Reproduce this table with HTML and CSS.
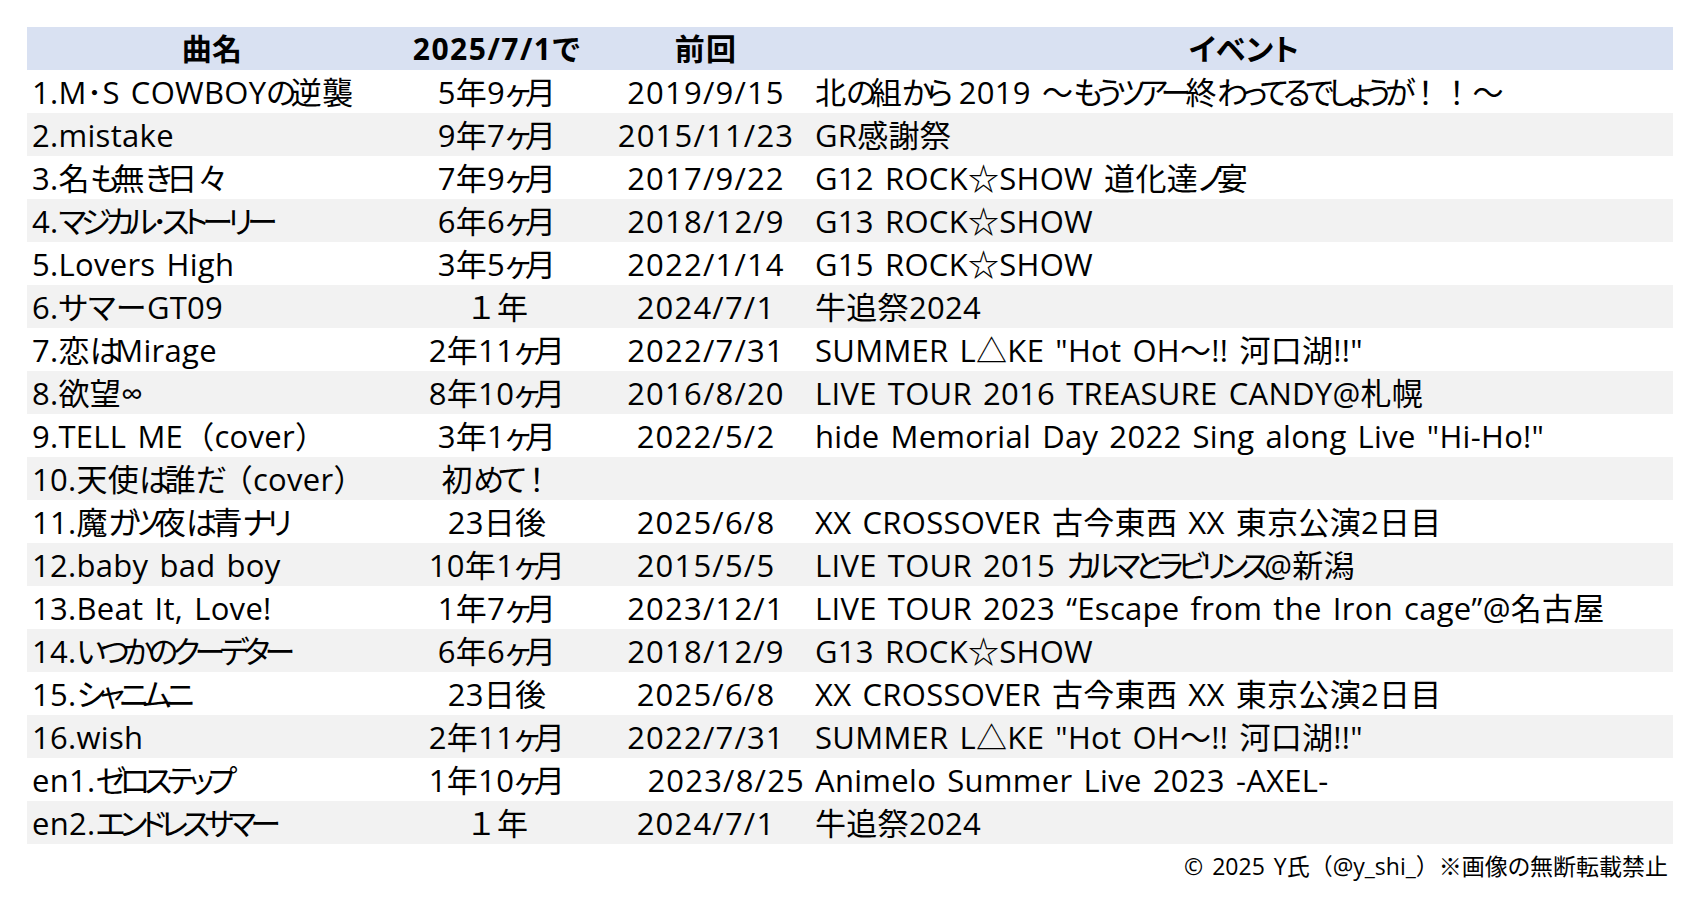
FILE: index.html
```html
<!DOCTYPE html>
<html lang="ja">
<head>
<meta charset="utf-8">
<title>セットリスト</title>
<link rel="stylesheet" href="styles.css">
</head>
<body>
<div class="sheet">
  <div class="table">
    <div class="row head">
      <div class="c song">曲名</div>
      <div class="c since">2025/7/1で</div>
      <div class="c prev">前回</div>
      <div class="c event">イベント</div>
    </div>
    <div class="row">
      <div class="c song">1.M･S COWBOY<span class="k">の</span>逆襲</div>
      <div class="c since">5年9<span class="k">ヶ</span>月</div>
      <div class="c prev">2019/9/15</div>
      <div class="c event">北<span class="k">の</span>組<span class="k">から</span> 2019 <span class="fw">～</span><span class="k">もうツアー</span>終<span class="k">わってるでしょうが</span><span class="fw">！！～</span></div>
    </div>
    <div class="row alt">
      <div class="c song">2.mistake</div>
      <div class="c since">9年7<span class="k">ヶ</span>月</div>
      <div class="c prev">2015/11/23</div>
      <div class="c event">GR感謝祭</div>
    </div>
    <div class="row">
      <div class="c song">3.名<span class="k">も</span>無<span class="k">き</span>日々</div>
      <div class="c since">7年9<span class="k">ヶ</span>月</div>
      <div class="c prev">2017/9/22</div>
      <div class="c event">G12 ROCK☆SHOW 道化達<span class="k">ノ</span>宴</div>
    </div>
    <div class="row alt">
      <div class="c song">4.<span class="k">マジカル･ストーリー</span></div>
      <div class="c since">6年6<span class="k">ヶ</span>月</div>
      <div class="c prev">2018/12/9</div>
      <div class="c event">G13 ROCK☆SHOW</div>
    </div>
    <div class="row">
      <div class="c song">5.Lovers High</div>
      <div class="c since">3年5<span class="k">ヶ</span>月</div>
      <div class="c prev">2022/1/14</div>
      <div class="c event">G15 ROCK☆SHOW</div>
    </div>
    <div class="row alt">
      <div class="c song">6.サマーGT09</div>
      <div class="c since"><span class="fw">１</span>年</div>
      <div class="c prev">2024/7/1</div>
      <div class="c event">牛追祭2024</div>
    </div>
    <div class="row">
      <div class="c song">7.恋<span class="k">は</span>Mirage</div>
      <div class="c since">2年11<span class="k">ヶ</span>月</div>
      <div class="c prev">2022/7/31</div>
      <div class="c event">SUMMER L△KE "Hot OH<span class="fw">～</span>!! 河口湖!!"</div>
    </div>
    <div class="row alt">
      <div class="c song">8.欲望∞</div>
      <div class="c since">8年10<span class="k">ヶ</span>月</div>
      <div class="c prev">2016/8/20</div>
      <div class="c event">LIVE TOUR 2016 TREASURE CANDY@札幌</div>
    </div>
    <div class="row">
      <div class="c song">9.TELL ME<span class="fw">（</span>cover<span class="fw">）</span></div>
      <div class="c since">3年1<span class="k">ヶ</span>月</div>
      <div class="c prev">2022/5/2</div>
      <div class="c event">hide Memorial Day 2022 Sing along Live "Hi-Ho!"</div>
    </div>
    <div class="row alt">
      <div class="c song">10.天使<span class="k">は</span>誰<span class="k">だ</span><span class="fw">（</span>cover<span class="fw">）</span></div>
      <div class="c since">初<span class="k">めて</span><span class="fw">！</span></div>
      <div class="c prev"></div>
      <div class="c event"></div>
    </div>
    <div class="row">
      <div class="c song">11.魔<span class="k">ガツ</span>夜<span class="k">は</span>青<span class="k">ナリ</span></div>
      <div class="c since">23日後</div>
      <div class="c prev">2025/6/8</div>
      <div class="c event">XX CROSSOVER 古今東西 XX 東京公演2日目</div>
    </div>
    <div class="row alt">
      <div class="c song">12.baby bad boy</div>
      <div class="c since">10年1<span class="k">ヶ</span>月</div>
      <div class="c prev">2015/5/5</div>
      <div class="c event">LIVE TOUR 2015 <span class="k">カルマとラビリンス</span>@新潟</div>
    </div>
    <div class="row">
      <div class="c song">13.Beat It, Love!</div>
      <div class="c since">1年7<span class="k">ヶ</span>月</div>
      <div class="c prev">2023/12/1</div>
      <div class="c event">LIVE TOUR 2023 “Escape from the Iron cage”@名古屋</div>
    </div>
    <div class="row alt">
      <div class="c song">14.<span class="k">いつかのクーデター</span></div>
      <div class="c since">6年6<span class="k">ヶ</span>月</div>
      <div class="c prev">2018/12/9</div>
      <div class="c event">G13 ROCK☆SHOW</div>
    </div>
    <div class="row">
      <div class="c song">15.<span class="k">シャニムニ</span></div>
      <div class="c since">23日後</div>
      <div class="c prev">2025/6/8</div>
      <div class="c event">XX CROSSOVER 古今東西 XX 東京公演2日目</div>
    </div>
    <div class="row alt">
      <div class="c song">16.wish</div>
      <div class="c since">2年11<span class="k">ヶ</span>月</div>
      <div class="c prev">2022/7/31</div>
      <div class="c event">SUMMER L△KE "Hot OH<span class="fw">～</span>!! 河口湖!!"</div>
    </div>
    <div class="row">
      <div class="c song">en1.<span class="k">ゼロステップ</span></div>
      <div class="c since">1年10<span class="k">ヶ</span>月</div>
      <div class="c prev right">2023/8/25</div>
      <div class="c event">Animelo Summer Live 2023 -AXEL-</div>
    </div>
    <div class="row alt">
      <div class="c song">en2.<span class="k">エンドレスサマー</span></div>
      <div class="c since"><span class="fw">１</span>年</div>
      <div class="c prev">2024/7/1</div>
      <div class="c event">牛追祭2024</div>
    </div>
  </div>
  <div class="credit">© 2025 Y氏<span class="fw">（</span>@y_shi_<span class="fw">）</span>※画像の無断転載禁止</div>
</div>
</body>
</html>
```

FILE: styles.css
```css
* {
  box-sizing: border-box;
}

html, body {
  margin: 0;
  padding: 0;
  background: #ffffff;
}

body {
  font-family: "Open Sans", "Noto Sans CJK JP", sans-serif;
  font-feature-settings: "palt" 1;
  word-spacing: 0.17em;
  color: #000000;
}

.fw {
  font-feature-settings: "palt" 0;
}

.k {
  letter-spacing: -0.18em;
}

.sheet {
  padding: 27px 0 0 27px;
  width: 1673px;
}

.table {
  display: flex;
  flex-direction: column;
}

.row {
  display: grid;
  grid-template-columns: 370px 200px 218px 858px;
  height: 43px;
  background: #ffffff;
}

.row.alt {
  background: #f2f2f2;
}

.row.head {
  background: #d9e1f2;
  font-weight: bold;
}

.c {
  font-size: 31px;
  line-height: 42px;
  height: 43px;
  padding-top: 1px;
  letter-spacing: 0.3px;
  white-space: nowrap;
  overflow: hidden;
}

.song {
  padding-left: 5px;
}

.since,
.prev {
  text-align: center;
}

.prev {
  letter-spacing: 1.2px;
}

.head .c {
  text-align: center;
  padding-left: 0;
  font-size: 30px;
}

.head .since {
  letter-spacing: 1.5px;
}

.prev.right {
  text-align: right;
  padding-right: 10px;
}

.event {
  padding-left: 0;
}

.credit {
  text-align: right;
  font-size: 23px;
  line-height: 30px;
  padding-top: 7px;
  padding-right: 5px;
  word-spacing: 0.13em;
}
```
